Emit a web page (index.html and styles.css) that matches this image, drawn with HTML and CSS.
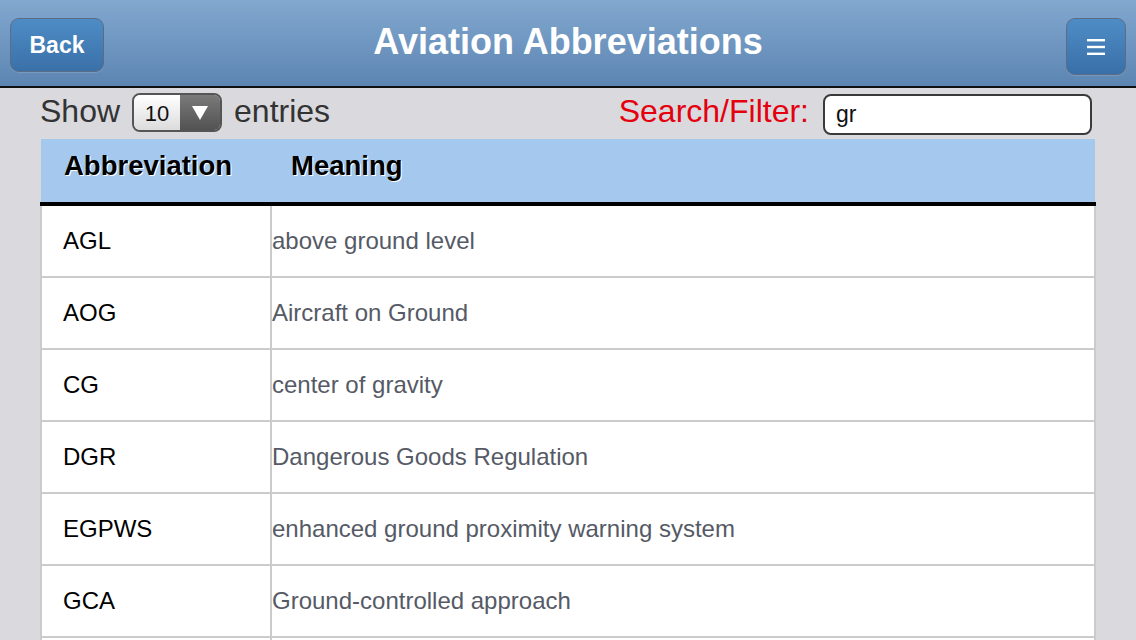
FILE: index.html
```html
<!DOCTYPE html>
<html>
<head>
<meta charset="utf-8">
<link rel="stylesheet" href="styles.css">
</head>
<body>
<header class="topbar">
  <button class="btn back">Back</button>
  <h1 class="title">Aviation Abbreviations</h1>
  <button class="btn menu" aria-label="menu">
    <svg width="20" height="18" viewBox="0 0 20 18"><rect x="1" y="1" width="18" height="2.4" fill="#fff"/><rect x="1" y="7.8" width="18" height="2.4" fill="#fff"/><rect x="1" y="14.6" width="18" height="2.4" fill="#fff"/></svg>
  </button>
</header>
<div class="controls">
  <div class="show">
    <span>Show</span>
    <div class="select"><span class="val">10</span><span class="arrow"><svg width="18" height="16" viewBox="0 0 18 16"><polygon points="1,1 17,1 9,15" fill="#fff"/></svg></span></div>
    <span>entries</span>
  </div>
  <div class="search">
    <span class="label">Search/Filter:</span>
    <div class="input">gr</div>
  </div>
</div>
<table class="grid">
  <thead>
    <tr><th class="c1">Abbreviation</th><th class="c2">Meaning</th></tr>
  </thead>
  <tbody>
    <tr><td class="c1">AGL</td><td class="c2">above ground level</td></tr>
    <tr><td class="c1">AOG</td><td class="c2">Aircraft on Ground</td></tr>
    <tr><td class="c1">CG</td><td class="c2">center of gravity</td></tr>
    <tr><td class="c1">DGR</td><td class="c2">Dangerous Goods Regulation</td></tr>
    <tr><td class="c1">EGPWS</td><td class="c2">enhanced ground proximity warning system</td></tr>
    <tr><td class="c1">GCA</td><td class="c2">Ground-controlled approach</td></tr>
    <tr><td class="c1"></td><td class="c2"></td></tr>
  </tbody>
</table>
</body>
</html>
```
FILE: styles.css
```css
html, body {
  margin: 0;
  padding: 0;
  height: 640px;
  overflow: hidden;
  background: #d9d9de;
  font-family: "Liberation Sans", Arial, sans-serif;
}
.topbar {
  height: 86px;
  border-bottom: 2px solid #111;
  background: linear-gradient(#82a8cf, #5c85b2);
  display: grid;
  grid-template-columns: 1fr auto 1fr;
  align-items: start;
  padding: 0 10px;
}
.btn {
  margin: 0;
  margin-top: 18px;
  border: 1.5px solid #5a6c86;
  border-radius: 9px;
  background: linear-gradient(#4e8cc6, #3a70a8);
  color: #fff;
  font-family: "Liberation Sans", Arial, sans-serif;
  font-weight: bold;
  padding: 0;
  display: flex;
  align-items: center;
  justify-content: center;
  box-shadow: 0 1px 1px rgba(255,255,255,0.15);
}
.back {
  justify-self: start;
  width: 94px;
  height: 54px;
  font-size: 23px;
}
.menu {
  justify-self: end;
  width: 60px;
  height: 57px;
}
.title {
  margin: 0;
  margin-top: 22px;
  color: #fff;
  font-size: 36px;
  font-weight: bold;
  line-height: 40px;
}
.controls {
  display: flex;
  justify-content: space-between;
  align-items: center;
  height: 47px;
  padding: 0 44px 4px 40px;
}
.show {
  display: flex;
  align-items: center;
  gap: 12px;
  font-size: 32px;
  color: #333;
}
.select {
  display: flex;
  width: 86px;
  height: 35px;
  border: 2px solid #555;
  border-radius: 8px;
  overflow: hidden;
  margin-top: 2px;
}
.val {
  width: 46px;
  background: linear-gradient(#ffffff, #dcdcdc);
  color: #111;
  font-size: 22px;
  display: flex;
  align-items: center;
  justify-content: center;
  padding-top: 2px;
  box-sizing: border-box;
}
.arrow {
  flex: 1;
  background: linear-gradient(#7a7a7a, #525252);
  display: flex;
  align-items: center;
  justify-content: center;
}
.search {
  display: flex;
  align-items: center;
  gap: 14px;
}
.label {
  color: #e5000e;
  font-size: 32px;
}
.input {
  width: 254px;
  height: 37px;
  border: 2px solid #3a3a3a;
  border-radius: 8px;
  background: #fff;
  font-size: 23px;
  color: #111;
  padding-left: 11px;
  display: flex;
  align-items: center;
  margin-top: 6px;
}
.grid {
  margin-left: 40px;
  width: 1056px;
  border-collapse: collapse;
  table-layout: fixed;
}
.grid thead th {
  background: #a4c8ee;
  height: 65px;
  border-bottom: 4px solid #000;
  text-align: left;
  font-size: 27.5px;
  font-weight: bold;
  color: #000;
  text-shadow: 1px 1px 0 #fff;
  padding: 0 0 10px 0;
  vertical-align: middle;
  box-sizing: border-box;
}
.grid thead th.c1 {
  padding-left: 23px;
  width: 230px;
}
.grid thead th.c2 {
  padding-left: 20px;
}
.grid tbody td {
  background: #fff;
  height: 70px;
  border: 2px solid #cbcbcb;
  font-size: 24px;
  padding: 0;
  vertical-align: middle;
}
.grid tbody tr:first-child td {
  border-top: none;
}
.grid tbody td.c1 {
  padding-left: 21px;
  color: #000;
}
.grid tbody td.c2 {
  color: #555a66;
}
```
